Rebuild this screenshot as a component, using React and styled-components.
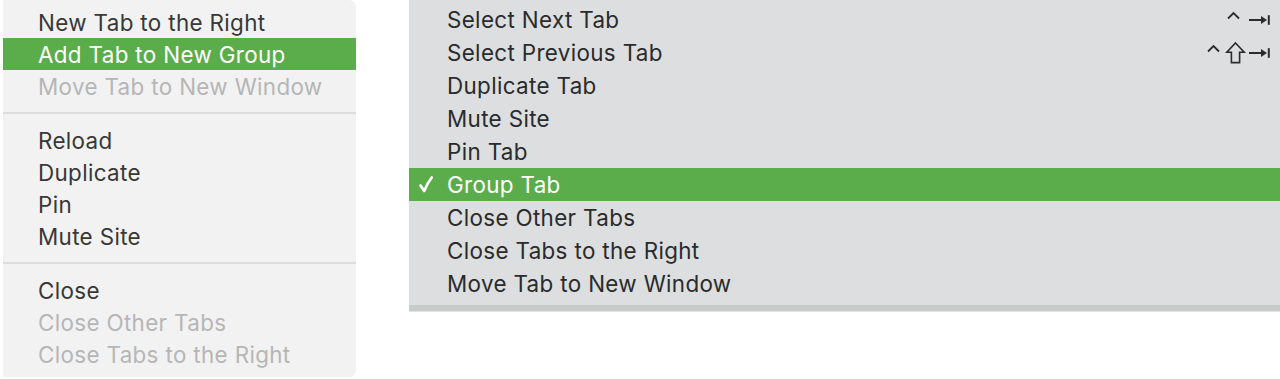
import React from "react";
import styled, { createGlobalStyle } from "styled-components";

const GlobalStyle = createGlobalStyle`
    html, body {
        margin: 0;
        padding: 0;
        background: #ffffff;
    }
    body {
        font-family: Inter, "Liberation Sans", sans-serif;
        -webkit-font-smoothing: antialiased;
    }
`;

const Page = styled.div`
    display: flex;
    align-items: flex-start;
    width: 1280px;
    height: 379px;
    overflow: hidden;
`;

const ContextMenu = styled.div`
    margin-left: 3px;
    width: 353px;
    background: #f2f2f2;
    border-radius: 0 7px 7px 2px;
    padding: 6px 0 7px;
`;

const TabMenu = styled.div`
    margin-left: 53px;
    flex: 1;
    background: #dcdedf;
    padding: 3px 0 5px;
    border-bottom: 6px solid #c9cbca;
    box-shadow: 0 1px 0 #e2e4e3;
`;

const Item = styled.div`
    display: flex;
    align-items: center;
    height: ${(p) => p.$h}px;
    padding: 0 10px 0 ${(p) => p.$pad}px;
    font-size: 22.4px;
    letter-spacing: 0.35px;
    color: ${(p) => (p.$active ? "#ffffff" : p.$disabled ? "#b6b6b6" : p.$dark ? "#2a2b2c" : "#383838")};
    background: ${(p) => (p.$active ? "#5bad4b" : "transparent")};
    white-space: nowrap;
`;

const Check = styled.svg`
    margin-left: -28px;
    margin-right: 14px;
    flex-shrink: 0;
`;

const Label = styled.span`
    flex: 1;
`;

const Shortcut = styled.span`
    display: flex;
    align-items: center;
    color: #2a2b2c;
`;

const Key = styled.svg`
    display: block;
    margin-left: ${(p) => p.$gap || 0}px;
    overflow: visible;
`;

const Separator = styled.div`
    height: 22px;
    display: flex;
    align-items: center;
    &::after {
        content: "";
        flex: 1;
        height: 2px;
        background: #dddddd;
    }
`;

const Control = ({ gap }) => (
    <Key $gap={gap} width="13" height="22" viewBox="0 -11 13 22">
        <polyline points="1,-1.5 6.5,-7 12,-1.5" fill="none" stroke="currentColor" strokeWidth="1.8" />
    </Key>
);

const Shift = ({ gap }) => (
    <Key $gap={gap} width="19" height="22" viewBox="0 -11 19 22">
        <path
            d="M9.5 -10 L18.2 -0.8 L13.6 -0.8 L13.6 9.6 L5.4 9.6 L5.4 -0.8 L0.8 -0.8 Z"
            fill="none"
            stroke="currentColor"
            strokeWidth="1.6"
            strokeLinejoin="miter"
        />
    </Key>
);

const TabKey = ({ gap }) => (
    <Key $gap={gap} width="21" height="22" viewBox="0 -11 21 22">
        <line x1="0" y1="0" x2="15" y2="0" stroke="currentColor" strokeWidth="2" />
        <polygon points="12,-4 18,0 12,4" fill="currentColor" />
        <line x1="19.8" y1="-4.8" x2="19.8" y2="4.8" stroke="currentColor" strokeWidth="2" />
    </Key>
);

const leftGroups = [
    [
        { label: "New Tab to the Right" },
        { label: "Add Tab to New Group", active: true },
        { label: "Move Tab to New Window", disabled: true },
    ],
    [
        { label: "Reload" },
        { label: "Duplicate" },
        { label: "Pin" },
        { label: "Mute Site" },
    ],
    [
        { label: "Close" },
        { label: "Close Other Tabs", disabled: true },
        { label: "Close Tabs to the Right", disabled: true },
    ],
];

const tabItems = [
    { label: "Select Next Tab", keys: true, shift: false },
    { label: "Select Previous Tab", keys: true, shift: true },
    { label: "Duplicate Tab" },
    { label: "Mute Site" },
    { label: "Pin Tab" },
    { label: "Group Tab", active: true, checked: true },
    { label: "Close Other Tabs" },
    { label: "Close Tabs to the Right" },
    { label: "Move Tab to New Window" },
];

const App = () => {
    return (
        <>
            <GlobalStyle />
            <Page>
                <ContextMenu>
                    {leftGroups.map((group, g) => (
                        <React.Fragment key={g}>
                            {g > 0 && <Separator />}
                            {group.map((item) => (
                                <Item
                                    key={item.label}
                                    $h={32}
                                    $pad={35}
                                    $active={item.active}
                                    $disabled={item.disabled}
                                >
                                    <Label>{item.label}</Label>
                                </Item>
                            ))}
                        </React.Fragment>
                    ))}
                </ContextMenu>
                <TabMenu>
                    {tabItems.map((item) => (
                        <Item key={item.label} $h={33} $pad={38} $active={item.active} $dark>
                            {item.checked && (
                                <Check width="14" height="17" viewBox="0 0 14 17">
                                    <path
                                        d="M1.5 9.5 L5.2 15 Q8 7.5 12.8 1.5"
                                        fill="none"
                                        stroke="#ffffff"
                                        strokeWidth="2.7"
                                        strokeLinecap="round"
                                        strokeLinejoin="round"
                                    />
                                </Check>
                            )}
                            <Label>{item.label}</Label>
                            {item.keys && (
                                <Shortcut>
                                    <Control />
                                    {item.shift ? (
                                        <>
                                            <Shift gap={6} />
                                            <TabKey gap={4} />
                                        </>
                                    ) : (
                                        <TabKey gap={9} />
                                    )}
                                </Shortcut>
                            )}
                        </Item>
                    ))}
                </TabMenu>
            </Page>
        </>
    );
};

export default App;
